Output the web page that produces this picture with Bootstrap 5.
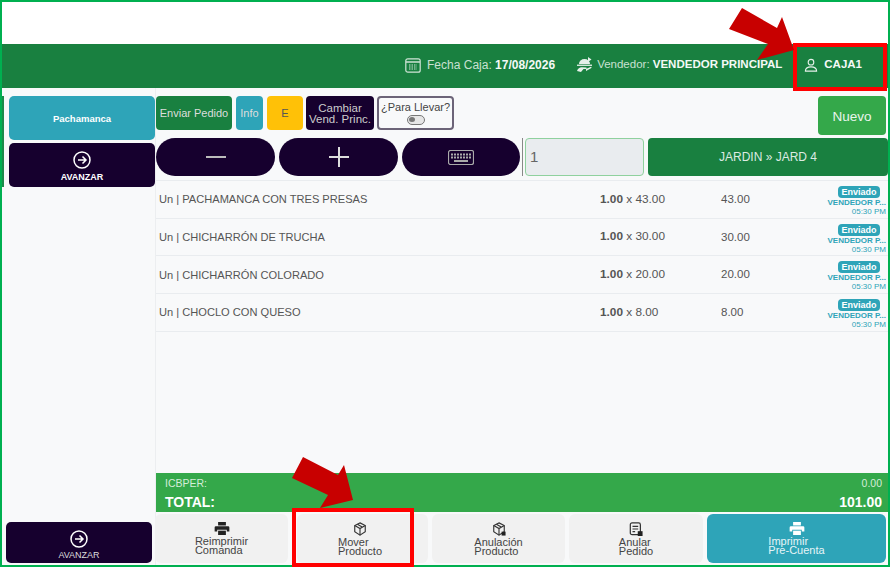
<!DOCTYPE html>
<html lang="en">
<head>
  <meta charset="UTF-8"/>
  <meta name="viewport" content="width=device-width, initial-scale=1.0"/>
  <title>Pedido - Caja</title>
  <link href="https://cdn.jsdelivr.net/npm/bootstrap@5.3.3/dist/css/bootstrap.min.css" rel="stylesheet"/>
  <style>
    html, body { height: 100%; overflow: hidden; }
    body { background: #fff; font-family: "Liberation Sans", Arial, sans-serif; }
    .frame { position: relative; width: 890px; height: 567px; border: 2px solid #00b050; }
    .top-blank { height: 42px; background: #fff; }
    .head-bar { height: 44px; background: #198040; color: #c9e0d2; font-size: 12px; padding: 0 26px 2px 0; gap: 21px; }
    .head-bar b { color: #f4f9f6; }
    .head-item { display: flex; align-items: center; gap: 6px; }
    .head-vend { font-size: 11.5px; gap: 4px; }
    .head-user { margin-left: 1px; font-size: 11.5px; }
    .work { height: 477px; background: #f8f9fa; }
    .side-col { width: 153px; padding: 8px 0 2px 0; }
    .side-top { border-left: 2px solid #1c8a4a; padding-left: 5px; width: 153px; }
    .side-btn { width: 146px; border-radius: 5px; font-size: 9px; font-weight: 700; color: #fff; text-align: center; }
    .side-pacha { height: 44px; padding-top: 3px; background: #2ea4b8; font-size: 9.5px; }
    .side-next { height: 44px; margin-top: 3px; background: #16002e; line-height: 1; padding-top: 8px; }
    .side-next svg { display: block; margin: 0 auto 4px; }
    .side-bottom { height: 41px; margin-left: 4px; background: #16002e; font-weight: 400; color: #ddd; padding-top: 8px; line-height: 1; }
    .side-bottom svg { display: block; margin: 0 auto 3px; }
    .main-col { flex: 1; min-width: 0; border-left: 1px solid #eceef0; }
    .tool-row { height: 39px; margin-top: 8px; gap: 4px; }
    .tool-btn { height: 34px; border-radius: 4px; font-size: 11px; line-height: 11px; color: #ddd; display: flex; align-items: center; justify-content: center; text-align: center; }
    .t-send { width: 76px; background: #198040; }
    .t-info { width: 27px; background: #2ea4b8; }
    .t-e { width: 36px; background: #ffc107; color: #555; }
    .t-vend { width: 68px; margin-left: -1px; background: #16002e; color: #ccc; font-size: 11.5px; padding-top: 1px; }
    .t-take { width: 77px; margin-left: -1px; background: #f8f9fa; border: 2px solid #6c6478; color: #444; flex-direction: column; gap: 2px; padding-top: 1px; }
    .toggle-mini { width: 18px; height: 10px; border: 1.5px solid #777; border-radius: 6px; background: #e6e6e6; display: block; padding: 1px; }
    .toggle-mini::before { content: ""; display: block; width: 6px; height: 5px; border-radius: 50%; background: #777; }
    .t-new { width: 68px; height: 39px; margin-left: auto; margin-right: 2px; background: #34a84a; color: #e9f5ec; font-size: 13.5px; padding-top: 2px; }
    .pad-row { height: 38px; margin-top: 3px; gap: 4px; }
    .pad-btn { flex: 0 0 119px; height: 38px; border-radius: 19px; background: #16002e; display: flex; align-items: center; justify-content: center; }
    .pad-kbd { flex-basis: 118px; }
    .qty-sep { flex: 0 0 1px; height: 38px; background: #888; margin: 0 -2px; }
    .qty-input { flex: 0 0 119px; height: 38px; background: #e9ecef; border: 1.5px solid #8fd19e; border-radius: 4px; color: #666; font-size: 15px; padding: 0 4px; line-height: 35px; }
    .table-btn { flex: 1; height: 38px; background: #198040; color: #dcebe2; border-radius: 4px; font-size: 12px; display: flex; align-items: center; justify-content: center; }
    .item-list { margin-top: 4px; border-top: 1px solid #e9ecef; height: 293px; }
    .item-row { display: grid; grid-template-columns: 441px 121px 1fr 72px; height: 37.700px; padding-left: 3px; align-items: center; border-bottom: 1px solid #e9ecef; font-size: 11.5px; color: #555; }
    .item-name { font-size: 11.100px; }
    .item-qty { font-size: 11.800px; }
    .item-state { height: 37px; padding-right: 2px; text-align: right; color: #2ea4b8; font-size: 8px; line-height: 8px; padding-top: 5px; }
    .state-pill { display: block; width: 42px; height: 12px; margin: 0 6px 2px auto; border-radius: 4px; background: #2ea4b8; color: #fff; font-size: 9px; font-weight: 700; line-height: 12px; text-align: center; }
    .state-who { display: block; height: 6px; margin-bottom: 2px; line-height: 6px; font-weight: 700; white-space: nowrap; }
    .totals { height: 39px; background: #34a84a; color: #fff; padding: 4px 6px 0 9px; }
    .totals-sub { font-size: 10.5px; line-height: 13px; color: #d5edd9; }
    .totals-main { font-size: 14px; font-weight: 700; line-height: 20px; margin-top: 2px; }
    .foot-row { height: 49px; margin: 2px 0 0 -1px; gap: 4px; padding-right: 2px; }
    .foot-btn { width: 133px; height: 49px; border-radius: 6px; background: #f1f1f1; color: #444; font-size: 11px; line-height: 9px; display: flex; flex-direction: column; align-items: center; padding-top: 8px; }
    .foot-btn svg { margin-bottom: 2px; flex: none; }
    .foot-move { margin-left: 5px; width: 131px; padding-right: 5px; }
    .foot-void { width: 134px; }
    .foot-print { flex: 1; background: #2ea4b8; color: #e6f4f7; }
    .mark-box { position: absolute; border: 4px solid #f00; pointer-events: none; }
    .mark-top { left: 791px; top: 41px; width: 94px; height: 48px; }
    .mark-low { left: 290px; top: 506px; width: 122px; height: 59px; }
    .arrow-layer { position: absolute; left: -2px; top: -2px; pointer-events: none; }
  </style>
</head>
<body>
  <div class="frame">
    <div class="top-blank"></div>

    <!-- Header -->
    <div class="head-bar d-flex justify-content-end align-items-center">
      <div class="head-item">
        <svg width="16" height="15" viewBox="0 0 16 15" fill="none" stroke="#cfe3d6" stroke-width="1.200"><rect x=".8" y=".8" width="14.400" height="13.400" rx="2"/><path d="M1 4h14" stroke-width="1.500"/><path d="M4 7h8M4 9h8M4 11h8" stroke-width="1.200" stroke-dasharray="1.500 1"/></svg>
        <span>Fecha Caja: <b>17/08/2026</b></span>
      </div>
      <div class="head-item head-vend">
        <svg width="17" height="16" viewBox="0 0 17 16" fill="#e6f0ea"><path d="M3 7a5.500 5 0 0 1 11 0z"/><path d="M12 0l3.500 2.500L12 5z"/><rect x="1" y="7.600" width="15" height="1.300"/><path d="M1 14c1-3 3-4 5-3.800l4 .3c1 .2 1 1.300 0 1.400H7.500l-2.500 3z"/><path d="M10 12l5-2.200c.8 0 .8 1 0 1.400L10 14z"/></svg>
        <span>Vendedor: <b>VENDEDOR PRINCIPAL</b></span>
      </div>
      <div class="head-item head-user">
        <svg width="14" height="14" viewBox="0 0 15 15" fill="none" stroke="#e6f0ea" stroke-width="1.200"><circle cx="7.500" cy="4.500" r="3"/><path d="M1.500 14c0-3.500 2.500-4.500 6-4.500s6 1 6 4.500z"/></svg>
        <b>CAJA1</b>
      </div>
    </div>

    <div class="work d-flex">
      <!-- Sidebar -->
      <div class="side-col d-flex flex-column">
        <div class="side-top">
          <div class="side-btn side-pacha d-flex align-items-center justify-content-center">Pachamanca</div>
          <div class="side-btn side-next">
            <svg width="18" height="18" viewBox="0 0 18 18" fill="none" stroke="#fff" stroke-width="1.500"><circle cx="9" cy="9" r="8"/><path d="M5 9h8M9.500 5.500L13 9l-3.500 3.500"/></svg>
            AVANZAR
          </div>
        </div>
        <div class="side-btn side-bottom mt-auto">
          <svg width="18" height="18" viewBox="0 0 18 18" fill="none" stroke="#fff" stroke-width="1.500"><circle cx="9" cy="9" r="8"/><path d="M5 9h8M9.500 5.500L13 9l-3.500 3.500"/></svg>
          AVANZAR
        </div>
      </div>

      <!-- Main -->
      <div class="main-col d-flex flex-column">
        <div class="tool-row d-flex">
          <div class="tool-btn t-send">Enviar Pedido</div>
          <div class="tool-btn t-info">Info</div>
          <div class="tool-btn t-e">E</div>
          <div class="tool-btn t-vend">Cambiar<br>Vend. Princ.</div>
          <div class="tool-btn t-take">¿Para Llevar?<span class="toggle-mini"></span></div>
          <div class="tool-btn t-new">Nuevo</div>
        </div>

        <div class="pad-row d-flex">
          <div class="pad-btn"><svg width="20" height="2" viewBox="0 0 20 2"><rect width="20" height="2" fill="#bbb"/></svg></div>
          <div class="pad-btn"><svg width="20" height="20" viewBox="0 0 20 20" fill="#ddd"><rect y="9" width="20" height="2"/><rect x="9" width="2" height="20"/></svg></div>
          <div class="pad-btn pad-kbd"><svg width="26" height="15" viewBox="0 0 26 15" fill="none" stroke="#aaa"><rect x=".5" y=".5" width="25" height="14" rx="2" stroke-width="1.200"/><path d="M3 4.500h20M3 7.500h20" stroke-width="2" stroke-dasharray="2 1"/><path d="M6 11h14" stroke-width="2"/></svg></div>
          <div class="qty-sep"></div>
          <div class="qty-input">1</div>
          <div class="table-btn">JARDIN » JARD 4</div>
        </div>

        <div class="item-list">
          <div class="item-row">
            <span class="item-name">Un | PACHAMANCA CON TRES PRESAS</span><span class="item-qty"><b>1.00</b> x 43.00</span><span>43.00</span>
            <div class="item-state"><span class="state-pill">Enviado</span><span class="state-who">VENDEDOR P...</span>05:30 PM</div>
          </div>
          <div class="item-row">
            <span class="item-name">Un | CHICHARRÓN DE TRUCHA</span><span class="item-qty"><b>1.00</b> x 30.00</span><span>30.00</span>
            <div class="item-state"><span class="state-pill">Enviado</span><span class="state-who">VENDEDOR P...</span>05:30 PM</div>
          </div>
          <div class="item-row">
            <span class="item-name">Un | CHICHARRÓN COLORADO</span><span class="item-qty"><b>1.00</b> x 20.00</span><span>20.00</span>
            <div class="item-state"><span class="state-pill">Enviado</span><span class="state-who">VENDEDOR P...</span>05:30 PM</div>
          </div>
          <div class="item-row">
            <span class="item-name">Un | CHOCLO CON QUESO</span><span class="item-qty"><b>1.00</b> x 8.00</span><span>8.00</span>
            <div class="item-state"><span class="state-pill">Enviado</span><span class="state-who">VENDEDOR P...</span>05:30 PM</div>
          </div>
        </div>

        <div class="totals">
          <div class="totals-sub d-flex justify-content-between"><span>ICBPER:</span><span>0.00</span></div>
          <div class="totals-main d-flex justify-content-between"><span>TOTAL:</span><span>101.00</span></div>
        </div>

        <div class="foot-row d-flex">
          <div class="foot-btn">
            <svg width="16" height="13" viewBox="0 0 17 15" fill="#222"><path d="M4 0h9v4H4z"/><path d="M1.500 4.800h14A1.500 1.500 0 0 1 17 6.300V11h-3V9H3v2H0V6.300a1.500 1.500 0 0 1 1.500-1.500z"/><path d="M4 10h9v5H4z"/></svg>
            Reimprimir<br>Comanda
          </div>
          <div class="foot-btn foot-move">
            <svg width="14" height="14" viewBox="0 0 16 16" fill="none" stroke="#333" stroke-width="1.300"><path d="M8 1l6 3v7l-6 4-6-4V4z"/><path d="M2 4l6 3.500L14 4M8 7.500V15M5 2.500l6 3.500"/></svg>
            Mover<br>Producto
          </div>
          <div class="foot-btn">
            <svg width="14" height="14" viewBox="0 0 16 16" fill="none" stroke="#333" stroke-width="1.300"><path d="M8 1l6 3v7l-6 4-6-4V4z"/><path d="M2 4l6 3.500L14 4M8 7.500V15M5 2.500l6 3.500"/><rect x="11" y="11" width="4.500" height="4.500" fill="#222" stroke="none"/></svg>
            Anulación<br>Producto
          </div>
          <div class="foot-btn foot-void">
            <svg width="14" height="14" viewBox="0 0 16 16" fill="none" stroke="#333" stroke-width="1.400"><rect x="1.500" y="1" width="11.500" height="13.500" rx="2"/><path d="M4 5h6.500M4 8h6.500M4 11h3"/><rect x="10" y="10.500" width="5.500" height="5.500" fill="#222" stroke="none"/></svg>
            Anular<br>Pedido
          </div>
          <div class="foot-btn foot-print">
            <svg width="16" height="13" viewBox="0 0 17 15" fill="#fff"><path d="M4 0h9v4H4z"/><path d="M1.500 4.800h14A1.500 1.500 0 0 1 17 6.300V11h-3V9H3v2H0V6.300a1.500 1.500 0 0 1 1.500-1.500z"/><path d="M4 10h9v5H4z"/></svg>
            Imprimir<br>Pre-Cuenta
          </div>
        </div>
      </div>
    </div>

    <!-- Annotations -->
    <div class="mark-box mark-top"></div>
    <div class="mark-box mark-low"></div>
    <svg class="arrow-layer" width="890" height="567" viewBox="0 0 890 567">
      <polygon fill="#c80000" points="742,8 777,28 782,17 794,50 757,60 768,44 729,29"/>
      <polygon fill="#c80000" points="303,457 338,475 344,465 353,500 320,508 328,495 292,478"/>
    </svg>
  </div>
  <script src="https://cdn.jsdelivr.net/npm/bootstrap@5.3.3/dist/js/bootstrap.bundle.min.js"></script>
</body>
</html>
